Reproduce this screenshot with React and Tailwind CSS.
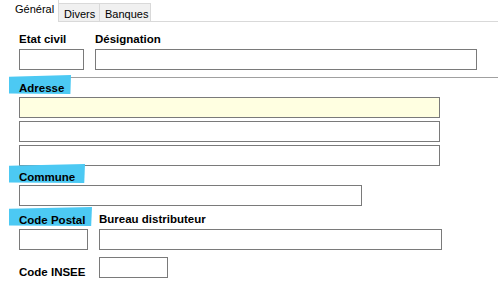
import React from "react";

const font = { fontFamily: '"Liberation Sans", Arial, sans-serif' };

function Box({ w, yellow }) {
  return (
    <div
      className={`h-[21px] border border-[#7a7a7a] ${yellow ? "bg-[#ffffe1]" : "bg-white"}`}
      style={{ width: w }}
    />
  );
}

function Marked({ children, w }) {
  return (
    <div className="relative h-[14px] leading-[14px]">
      <div
        className="absolute -left-[10px] -top-[5px] h-[19px] bg-[#4cc9f3] [clip-path:polygon(0_9%,100%_0,99%_100%,0_97%)]"
        style={{ width: w }}
      />
      <span className="relative font-bold text-[11.5px] text-black">{children}</span>
    </div>
  );
}

export default function App() {
  return (
    <div className="w-[498px] h-[292px] bg-white overflow-hidden text-black" style={font}>
      {/* tabs */}
      <div className="flex h-[22px] items-end">
        <div className="w-[8px] h-[22px]" />
        <div className="w-[51px] h-[22px] bg-white border-r border-[#d9d9d9] text-[11px] pl-[7px] pt-[2px] leading-[14px]">
          Général
        </div>
        <div className="w-[41px] h-[19px] bg-[#f0f0f0] border-t border-r border-b border-[#d9d9d9] text-[11px] pl-[5px] pt-[3px] leading-[14px]">
          Divers
        </div>
        <div className="w-[51px] h-[19px] bg-[#f0f0f0] border-t border-r border-b border-[#d9d9d9] text-[11px] pl-[5px] pt-[3px] leading-[14px]">
          Banques
        </div>
        <div className="flex-1 h-[22px] border-b border-[#d9d9d9]" />
      </div>

      <div className="pl-[19px]">
        {/* etat civil / designation */}
        <div className="flex gap-[11px] mt-[10px] h-[14px] leading-[14px] font-bold text-[11.5px]">
          <div className="w-[65px]">Etat civil</div>
          <div>Désignation</div>
        </div>
        <div className="flex gap-[11px] mt-[3px]">
          <Box w={65} />
          <Box w={382} />
        </div>
      </div>

      <div className="ml-[9px] mt-[7px] h-px bg-[#a0a0a0]" />

      <div className="pl-[19px]">
        <div className="mt-[2px]">
          <Marked w={62}>Adresse</Marked>
        </div>
        <div className="flex flex-col gap-[3px] mt-[3px]">
          <Box w={421} yellow />
          <Box w={421} />
          <Box w={421} />
        </div>

        <div className="mt-[3px]">
          <Marked w={76}>Commune</Marked>
        </div>
        <div className="mt-[2px]">
          <Box w={343} />
        </div>

        <div className="flex gap-[11px] mt-[6px]">
          <div className="w-[69px]">
            <Marked w={83}>Code Postal</Marked>
          </div>
          <div className="h-[14px] leading-[14px] font-bold text-[11.5px]">Bureau distributeur</div>
        </div>
        <div className="flex gap-[11px] mt-[3px]">
          <Box w={69} />
          <Box w={343} />
        </div>

        <div className="flex gap-[11px] mt-[7px] items-start">
          <div className="w-[69px] mt-[8px] h-[14px] leading-[14px] font-bold text-[11.5px]">Code INSEE</div>
          <Box w={69} />
        </div>
      </div>
    </div>
  );
}
